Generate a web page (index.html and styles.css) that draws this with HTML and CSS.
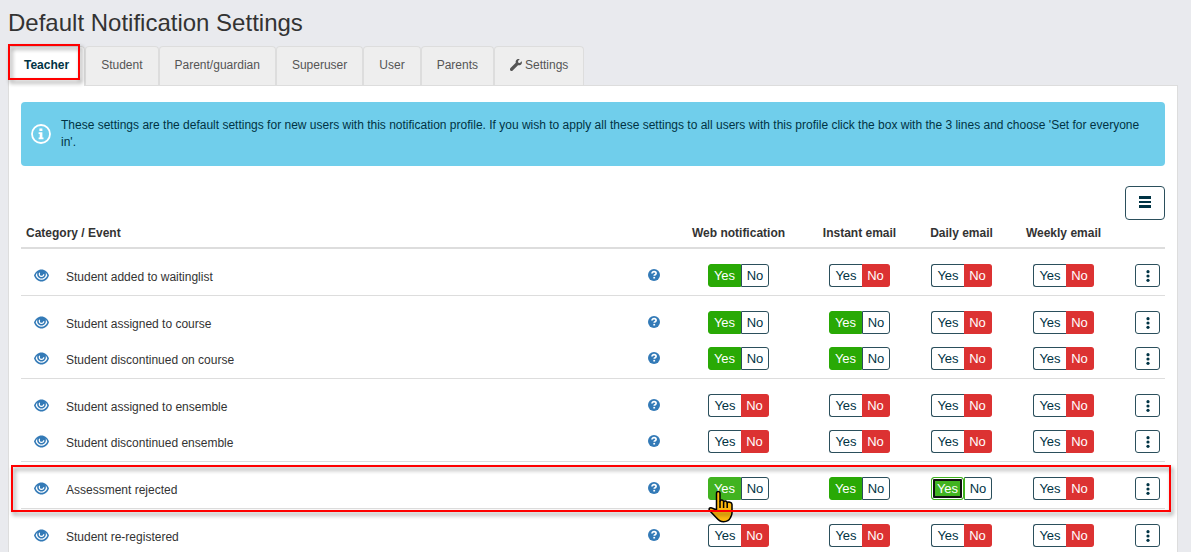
FILE: index.html
```html
<!DOCTYPE html>
<html lang="en">
<head>
  <meta charset="UTF-8" />
  <title>Default Notification Settings</title>
  <link rel="stylesheet" href="styles.css">
</head>
<body>
  <svg class="sprite" aria-hidden="true">
    <symbol id="icon-eye" viewBox="0 0 15 12">
      <path d="M7.500 0C4 0 1.300 2.500 0 6c1.300 3.500 4 6 7.500 6s6.200-2.500 7.500-6C13.700 2.500 11 0 7.500 0z"/>
      <path d="M3.300 3C2.500 3.900 1.900 5 1.700 6c1 2.600 3.100 4.300 5.800 4.300s4.800-1.700 5.800-4.300c-.2-1-.8-2.100-1.600-3 .8 3.400-1.200 6-4.200 6S2.500 6.400 3.300 3z" fill="#fff"/>
      <path d="M5.600 3.200C4.700 5 5.700 6.900 7.500 6.900c1.300 0 2.200-.9 2.300-2.100" fill="none" stroke="#fff" stroke-width="1.200"/>
    </symbol>
    <symbol id="icon-help" viewBox="0 0 12 12">
      <circle cx="6" cy="6" r="6"/>
      <path d="M4 4.600C4 3.300 4.900 2.700 6.100 2.700s2 .7 2 1.700c0 1.300-1.900 1.200-1.900 2.400" fill="none" stroke="#fff" stroke-width="1.700"/>
      <path d="M5.300 7.900h1.800v1.600H5.300z" fill="#fff"/>
    </symbol>
    <symbol id="icon-dots" viewBox="0 0 4 12">
      <circle cx="2" cy="1.700" r="1.600"/>
      <circle cx="2" cy="6" r="1.600"/>
      <circle cx="2" cy="10.300" r="1.600"/>
    </symbol>
    <symbol id="icon-hand" viewBox="0 0 26 33">
      <path d="M8.500 20V3.500c0-2.600 3.500-2.600 3.500 0V11c.5-1.500 3.400-1.300 3.600.8.700-1.400 3.300-1.100 3.600 1 .8-1.400 4.800-.8 4.800 1.700V23c0 2-.6 3-1.500 4.500-1.300 3-3.700 4.200-6.900 4.200-3.300 0-5.300-1.500-7.200-3.900L1.500 20.500c-1.300-2.400 1.300-3.500 3-2.200z" fill="#ffb90f" stroke="#000" stroke-width="1.500" stroke-linejoin="round"/>
      <path d="M12 11v7M15.600 12v6M19.200 13v5" fill="none" stroke="#000" stroke-width="1.500"/>
    </symbol>
  </svg>

  <h1>Default Notification Settings</h1>

  <nav class="tabs">
    <a href="#teacher" class="tab active">Teacher<span class="mark"></span></a>
    <a href="#student" class="tab">Student</a>
    <a href="#guardian" class="tab">Parent/guardian</a>
    <a href="#superuser" class="tab">Superuser</a>
    <a href="#user" class="tab">User</a>
    <a href="#parents" class="tab">Parents</a>
    <a href="#settings" class="tab">
      <svg class="wrench" viewBox="0 0 12 12"><path d="M11.700 2.300 9.900 4 8.300 3.700 8 2.100 9.700.3C8.200-.3 6.500.3 5.900 1.700c-.3.700-.3 1.400-.1 2.100L.5 9.100c-.7.700-.7 1.700-.1 2.300.7.700 1.700.7 2.300 0L8 6.200c1.400.4 2.900-.2 3.600-1.500.4-.8.400-1.600.1-2.400z"/></svg>
      Settings
    </a>
  </nav>

  <main class="panel">
    <div class="alert">
      <svg class="info" viewBox="0 0 20 20">
        <circle cx="10" cy="10" r="9" fill="none" stroke="#fff" stroke-width="1.800"/>
        <path d="M8.400 4.500h3v2.600h-3zM7.600 8.300h3.800v5.200h1.100v1.700H7.600v-1.700h1.100V10H7.600z" fill="#fff"/>
      </svg>
      <p>These settings are the default settings for new users with this notification profile. If you wish to apply all these settings to all users with this profile click the box with the 3 lines and choose 'Set for everyone in'.</p>
    </div>

    <div class="toolbar">
      <button type="button" class="menu-btn" aria-label="Menu">
        <svg viewBox="0 0 12 12"><path d="M0 0h12v3H0zM0 5h12v2H0zM0 9h12v3H0z"/></svg>
      </button>
    </div>

    <table id="events">
      <colgroup>
        <col class="col-eye"><col><col class="col-help"><col class="col-web">
        <col class="col-instant"><col class="col-daily"><col class="col-weekly"><col class="col-more">
      </colgroup>
      <thead>
        <tr>
          <th colspan="2" class="left">Category / Event</th>
          <th></th>
          <th>Web notification</th>
          <th>Instant email</th>
          <th>Daily email</th>
          <th>Weekly email</th>
          <th></th>
        </tr>
      </thead>
    </table>
  </main>

  <script>
    // one inner array per category; flags are web, instant, daily, weekly
    const groups = [
      [{ name: 'Student added to waitinglist', on: [1, 0, 0, 0] }],
      [
        { name: 'Student assigned to course', on: [1, 1, 0, 0] },
        { name: 'Student discontinued on course', on: [1, 1, 0, 0] }
      ],
      [
        { name: 'Student assigned to ensemble', on: [0, 0, 0, 0] },
        { name: 'Student discontinued ensemble', on: [0, 0, 0, 0] }
      ],
      [{ name: 'Assessment rejected', on: [1, 1, 1, 0], marked: true, hover: 0, focus: 2 }],
      [{ name: 'Student re-registered', on: [0, 0, 0, 0] }]
    ];

    const icon = (id) => `<svg class="${id}"><use href="#${id}"/></svg>`;

    function toggle(row, i) {
      const on = row.on[i];
      let state = '';
      if (row.hover === i) state = ' hovered';
      if (row.focus === i) state = ' focused';
      return `<td><div class="toggle">
        <button type="button" class="yes${on ? ' on' : ''}${state}">Yes</button><button type="button" class="no${on ? '' : ' on'}">No</button>
        ${row.hover === i ? icon('icon-hand') : ''}
      </div></td>`;
    }

    const table = document.getElementById('events');
    groups.forEach((rows) => {
      const body = document.createElement('tbody');
      body.innerHTML = rows.map((row) => `<tr>
        <td>${icon('icon-eye')}</td>
        <td class="left name">${row.name}</td>
        <td>${icon('icon-help')}</td>
        ${row.on.map((_, i) => toggle(row, i)).join('')}
        <td><button type="button" class="more" aria-label="More">${icon('icon-dots')}</button>${row.marked ? '<span class="mark"></span>' : ''}</td>
      </tr>`).join('');
      table.appendChild(body);
    });
  </script>
</body>
</html>
```
FILE: styles.css
```css
* { box-sizing: border-box; margin: 0; padding: 0; }
body {
  padding: 8px 13px 0 8px;
  background: #e9eaee;
  color: #333;
  font-family: "Liberation Sans", Arial, sans-serif;
  font-size: 12px;
  line-height: 17px;
}
svg { display: block; fill: currentColor; }
.sprite { position: absolute; width: 0; height: 0; }
h1 {
  margin-bottom: 8px;
  font-size: 24px;
  font-weight: 400;
  line-height: 30px;
}
button {
  background: #fff;
  border: 1px solid #2b4f5c;
  color: #003344;
  font-family: inherit;
  cursor: pointer;
}

/* tabs */
.tabs { display: flex; }
.tab {
  display: flex;
  align-items: center;
  gap: 3px;
  height: 39px;
  padding: 0 15px 2px;
  background: #eee;
  border: 1px solid #ddd;
  border-bottom: 0;
  border-radius: 4px 4px 0 0;
  color: #555;
  text-decoration: none;
}
.tab.active {
  position: relative;
  height: 40px;
  margin-bottom: -1px;
  background: #fff;
  color: #003344;
  font-weight: 700;
}
.wrench { width: 12px; height: 12px; }

/* red annotation frame */
.mark {
  position: absolute;
  border: 2px solid #f00;
  filter: drop-shadow(2px 3px 2px rgba(0,0,0,0.45));
  pointer-events: none;
}
.tab .mark { top: -3px; right: 4px; bottom: 6px; left: -1px; }

.panel {
  padding: 16px 12px;
  background: #fff;
  border: 1px solid #ddd;
}
.alert {
  display: flex;
  align-items: center;
  gap: 10px;
  padding: 15px 15px 15px 10px;
  background: #70ceeb;
  border-radius: 4px;
  color: #003344;
}
.info { flex: none; width: 20px; height: 20px; }
.toolbar {
  display: flex;
  justify-content: flex-end;
  margin-top: 20px;
}
.menu-btn {
  display: grid;
  place-items: center;
  width: 40px;
  height: 34px;
  padding-bottom: 2px;
  border-radius: 4px;
}
.menu-btn svg { width: 12px; height: 12px; }

/* events */
table {
  width: 100%;
  table-layout: fixed;
  border-collapse: separate;
  border-spacing: 0;
}
.col-eye, .col-more { width: 40px; }
.col-help { width: 50px; }
.col-web { width: 119px; }
.col-instant { width: 123px; }
.col-daily { width: 81px; }
.col-weekly { width: 123px; }
th {
  padding: 5px;
  border-bottom: 2px solid #ddd;
  white-space: nowrap;
}
td {
  padding: 5px 5px 8px;
  text-align: center;
  vertical-align: top;
}
tr:first-child td { padding-top: 15px; }
tr:last-child td { border-bottom: 1px solid #ddd; }
tbody tr { position: relative; }
.left { text-align: left; }
.name { line-height: 19px; vertical-align: bottom; }
.icon-eye { width: 15px; height: 23px; margin: 0 auto; color: #337ab7; }
.icon-help { width: 12px; height: 22px; margin: 0 auto; color: #337ab7; }
.toggle {
  position: relative;
  display: flex;
  justify-content: center;
  width: 61px;
  margin: 0 auto;
}
.toggle button {
  height: 23px;
  font-size: 13px;
  line-height: 21px;
}
.yes { width: 33px; border-radius: 3px 0 0 3px; }
.no { width: 28px; border-left: 0; border-radius: 0 3px 3px 0; }
.yes:not(.on) { border-right: 0; }
.yes.on { background: #29a905; border-color: #29a905; color: #fff; }
.no.on { background: #dc3232; border-color: #dc3232; color: #fff; }
.yes.on + .no { border-left: 1px solid #2b4f5c; }
.yes.hovered, .yes.focused { background: #41b320; border-color: #41b320; }
.yes.focused {
  border-radius: 3px;
  outline: 0;
  box-shadow: inset 0 0 0 1px #fff, inset 0 0 0 3px #101010;
}
.yes.focused + .no { border-left-color: #41b320; }
.icon-hand {
  position: absolute;
  top: 13px;
  left: 0;
  width: 26px;
  height: 33px;
}
.more {
  display: grid;
  place-items: center;
  width: 25px;
  height: 23px;
  margin-left: auto;
  border-radius: 3px;
}
.icon-dots { width: 4px; height: 12px; }
td .mark { top: 3px; right: -6px; bottom: -3px; left: -10px; }
```
